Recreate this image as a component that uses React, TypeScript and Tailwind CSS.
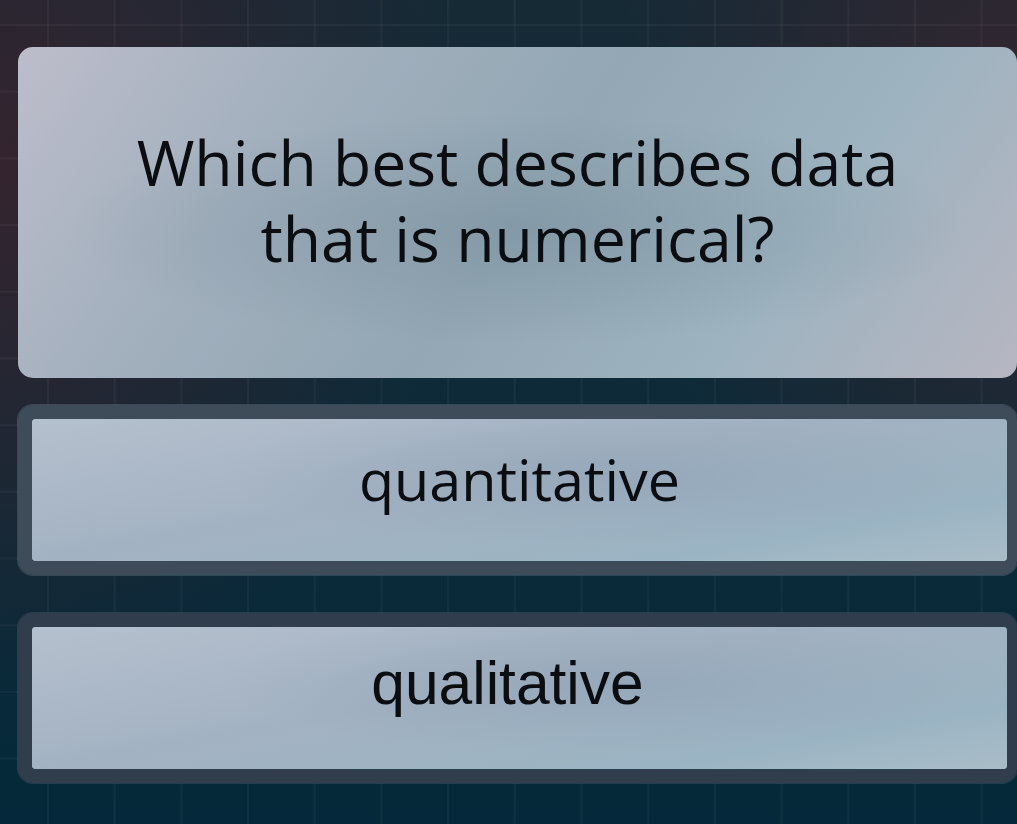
import React from 'react';

type Answer = {
  label: string;
  frame: string;
  font: string;
  textPad: string;
};

const answers: Answer[] = [
  {
    label: 'quantitative',
    frame: 'mt-[27px] border-[#3e4b59] shadow-[0_0_0_1px_rgba(120,135,150,0.35)]',
    font: "font-['Open_Sans',sans-serif] text-[57.5px]",
    textPad: 'pb-[20px]',
  },
  {
    label: 'qualitative',
    frame: 'mt-[38px] border-[#2f3d4c] shadow-[0_0_0_1px_rgba(100,115,130,0.3)]',
    font: "font-['Liberation_Sans',Arial,sans-serif] text-[60.5px]",
    textPad: 'pb-[30px] pr-[24px]',
  },
];

function QuestionCard({ lines }: { lines: [string, string] }) {
  return (
    <div className="h-[331px] rounded-[15px] bg-[radial-gradient(ellipse_45%_35%_at_50%_55%,rgba(120,142,156,0.55),transparent),linear-gradient(125deg,#bdbdca_0%,#a3b0be_25%,#93a7b4_50%,#9eb3c0_75%,#b6b6c1_100%)] pt-[77px] text-center">
      <p className="font-['Open_Sans',sans-serif] text-[62.5px] leading-[76px] text-[#0b0d10]">
        {lines[0]}
        <br />
        {lines[1]}
      </p>
    </div>
  );
}

function AnswerButton({ answer }: { answer: Answer }) {
  return (
    <button
      className={`block w-full rounded-[15px] border-[14px] border-r-[10px] ${answer.frame}`}
    >
      <div
        className={`flex h-[142px] items-center justify-center rounded-[3px] bg-[radial-gradient(ellipse_40%_50%_at_60%_40%,rgba(138,158,178,0.5),transparent),linear-gradient(170deg,#b5c0ce_0%,#a3b2c2_45%,#9bb4c3_80%,#a9bdc8_100%)] ${answer.textPad}`}
      >
        <span className={`${answer.font} leading-none text-[#0b0d10]`}>
          {answer.label}
        </span>
      </div>
    </button>
  );
}

export default function App() {
  return (
    <div className="min-h-screen bg-[radial-gradient(ellipse_45%_65%_at_0%_20%,#34242f,transparent),radial-gradient(ellipse_40%_55%_at_100%_15%,#34262f,transparent),linear-gradient(to_bottom,#162a36,#05293a)]">
      <div className="min-h-screen bg-[linear-gradient(to_right,rgba(255,255,255,0.04)_2px,transparent_2px),linear-gradient(to_bottom,rgba(255,255,255,0.04)_2px,transparent_2px)] bg-[size:66.7px_66.7px] bg-[position:47px_24px] pl-[18px] pt-[47px] pb-[40px]">
        <QuestionCard lines={['Which best describes data', 'that is numerical?']} />
        {answers.map((a) => (
          <AnswerButton key={a.label} answer={a} />
        ))}
      </div>
    </div>
  );
}
